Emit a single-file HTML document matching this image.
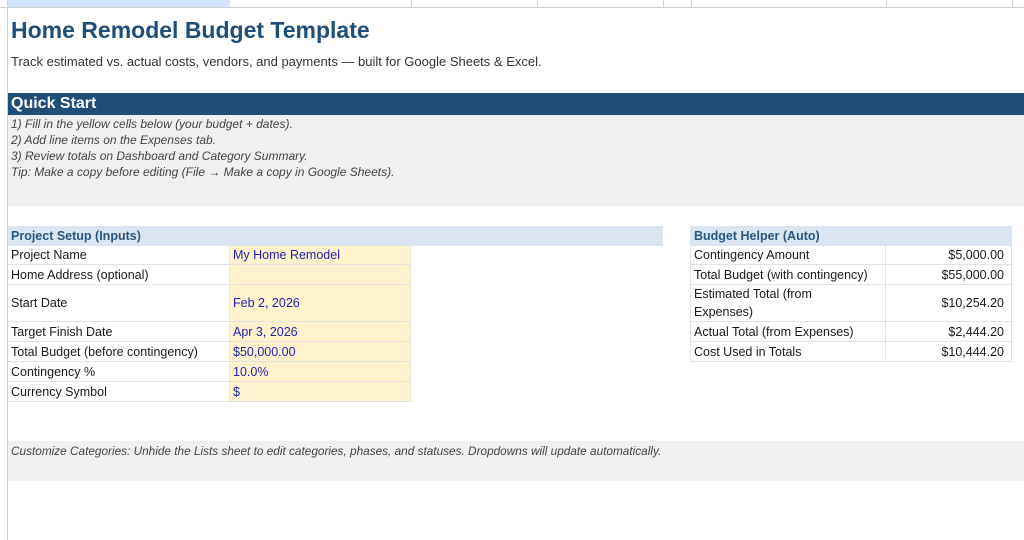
<!DOCTYPE html>
<html><head><style>
*{margin:0;padding:0;box-sizing:border-box}
body{width:1024px;height:540px;overflow:hidden;background:#fff;font-family:"Liberation Sans",sans-serif;position:relative;color:#222}
.a{position:absolute}
.t{font-size:12.5px;white-space:nowrap}
.i{font-style:italic;font-size:12px;color:#444;white-space:nowrap}
.c{position:absolute;border-bottom:1px solid #e2e2e2;border-right:1px solid #e2e2e2;font-size:12.5px;padding-left:3px;display:flex;align-items:center;white-space:nowrap;color:#1a1a1a}
.v{background:#fff2cc;color:#2424b0}
.r{justify-content:flex-end;padding-right:7px}
</style></head><body>
<div class="a" style="left:0;top:0;width:1024px;height:8px;border-bottom:1px solid #d0d0d0"></div>
<div class="a" style="left:8px;top:0;width:222px;height:7px;background:#d3e3fd"></div>
<div class="a" style="left:411px;top:0;width:1px;height:7px;background:#d0d0d0"></div>
<div class="a" style="left:537px;top:0;width:1px;height:7px;background:#d0d0d0"></div>
<div class="a" style="left:663px;top:0;width:1px;height:7px;background:#d0d0d0"></div>
<div class="a" style="left:691px;top:0;width:1px;height:7px;background:#d0d0d0"></div>
<div class="a" style="left:886px;top:0;width:1px;height:7px;background:#d0d0d0"></div>
<div class="a" style="left:1012px;top:0;width:1px;height:7px;background:#d0d0d0"></div>
<div class="a" style="left:7px;top:0;width:1px;height:540px;background:#d0d0d0"></div>
<div class="a" style="left:11px;top:17px;font-size:23px;font-weight:bold;color:#1f4e79;white-space:nowrap">Home Remodel Budget Template</div>
<div class="a t" style="left:11px;top:54px;font-size:13px;color:#333">Track estimated vs. actual costs, vendors, and payments — built for Google Sheets &amp; Excel.</div>
<div class="a" style="left:8px;top:93px;width:1016px;height:22px;background:#1f4e79;color:#fff;font-weight:bold;font-size:16px;padding:2px 0 0 3px">Quick Start</div>
<div class="a" style="left:8px;top:115px;width:1016px;height:91px;background:#f0f0f0"></div>
<div class="a i" style="left:11px;top:117px">1) Fill in the yellow cells below (your budget + dates).</div>
<div class="a i" style="left:11px;top:133px">2) Add line items on the Expenses tab.</div>
<div class="a i" style="left:11px;top:149px">3) Review totals on Dashboard and Category Summary.</div>
<div class="a i" style="left:11px;top:165px">Tip: Make a copy before editing (File → Make a copy in Google Sheets).</div>

<div class="a" style="left:8px;top:226px;width:655px;height:20px;background:#dbe5f1;color:#2a5885;font-weight:bold;font-size:12.5px;padding:3px 0 0 3px">Project Setup (Inputs)</div>
<div class="c" style="left:8px;top:246px;width:222px;height:19px">Project Name</div><div class="c v" style="left:230px;top:246px;width:181px;height:19px">My Home Remodel</div>
<div class="c" style="left:8px;top:265px;width:222px;height:20px">Home Address (optional)</div><div class="c v" style="left:230px;top:265px;width:181px;height:20px"></div>
<div class="c" style="left:8px;top:285px;width:222px;height:37px">Start Date</div><div class="c v" style="left:230px;top:285px;width:181px;height:37px">Feb 2, 2026</div>
<div class="c" style="left:8px;top:322px;width:222px;height:20px">Target Finish Date</div><div class="c v" style="left:230px;top:322px;width:181px;height:20px">Apr 3, 2026</div>
<div class="c" style="left:8px;top:342px;width:222px;height:20px">Total Budget (before contingency)</div><div class="c v" style="left:230px;top:342px;width:181px;height:20px">$50,000.00</div>
<div class="c" style="left:8px;top:362px;width:222px;height:20px">Contingency %</div><div class="c v" style="left:230px;top:362px;width:181px;height:20px">10.0%</div>
<div class="c" style="left:8px;top:382px;width:222px;height:20px">Currency Symbol</div><div class="c v" style="left:230px;top:382px;width:181px;height:20px">$</div>

<div class="a" style="left:690px;top:226px;width:322px;height:20px;background:#dbe5f1;color:#2a5885;font-weight:bold;font-size:12.5px;padding:3px 0 0 4px">Budget Helper (Auto)</div>
<div class="a" style="left:690px;top:246px;width:1px;height:116px;background:#e2e2e2"></div>
<div class="c" style="left:691px;top:246px;width:195px;height:19px">Contingency Amount</div><div class="c r" style="left:886px;top:246px;width:126px;height:19px">$5,000.00</div>
<div class="c" style="left:691px;top:265px;width:195px;height:20px">Total Budget (with contingency)</div><div class="c r" style="left:886px;top:265px;width:126px;height:20px">$55,000.00</div>
<div class="c" style="left:691px;top:285px;width:195px;height:37px;line-height:18px"><span>Estimated Total (from<br>Expenses)</span></div><div class="c r" style="left:886px;top:285px;width:126px;height:37px">$10,254.20</div>
<div class="c" style="left:691px;top:322px;width:195px;height:20px">Actual Total (from Expenses)</div><div class="c r" style="left:886px;top:322px;width:126px;height:20px">$2,444.20</div>
<div class="c" style="left:691px;top:342px;width:195px;height:20px">Cost Used in Totals</div><div class="c r" style="left:886px;top:342px;width:126px;height:20px">$10,444.20</div>

<div class="a" style="left:8px;top:441px;width:1016px;height:40px;background:#f0f0f0"></div>
<div class="a i" style="left:11px;top:444px;font-size:11.8px">Customize Categories: Unhide the Lists sheet to edit categories, phases, and statuses. Dropdowns will update automatically.</div>
</body></html>
